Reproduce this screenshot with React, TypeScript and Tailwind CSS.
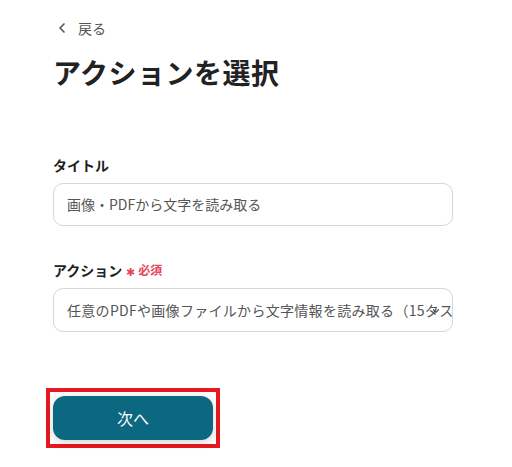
import { ChevronLeft, ChevronDown } from 'lucide-react'

const font = { fontFamily: '"Noto Sans CJK JP", "Noto Sans", sans-serif' }

export default function App() {
  return (
    <div className="min-h-[467px] w-[512px] bg-white text-[#222]" style={font}>
      <div className="pl-[53px] pt-[18px]">
        {/* Back link */}
        <div className="flex h-5 items-center gap-[8px] text-[14px] text-[#555]">
          <ChevronLeft className="h-4 w-4 ml-[1px]" strokeWidth={2.5} />
          <span>戻る</span>
        </div>

        {/* Heading */}
        <h1 className="mt-[14px] text-[28px] font-bold leading-[40px] tracking-[0.5px] text-[#222]">アクションを選択</h1>

        {/* Title field */}
        <label className="mt-[63px] block text-[14px] font-bold leading-5">タイトル</label>
        <div className="mt-2 flex h-[43px] w-[400px] items-center rounded-[10px] border border-[#d3d6db] px-[13px] text-[14px] text-[#555]">
          画像・PDFから文字を読み取る
        </div>

        {/* Action field */}
        <div className="mt-[34px] flex h-5 items-center">
          <span className="text-[14px] font-bold">アクション</span>
          <span className="ml-[4px] mt-[3px] text-[11px] text-[#e8445a]">✱</span>
          <span className="ml-[3px] text-[12px] font-bold text-[#e8445a]">必須</span>
        </div>
        <div className="relative mt-2 flex h-[44px] w-[400px] items-center overflow-hidden rounded-[10px] border border-[#d3d6db] pl-[13px] pr-[12px] text-[14px] text-[#555]">
          <span className="whitespace-nowrap tracking-[0.3px]">任意のPDFや画像ファイルから文字情報を読み取る（15タスク）</span>
          <ChevronDown className="absolute right-[11px] top-[17px] h-[10px] w-[10px] text-[#555]" strokeWidth={3} />
        </div>

        {/* Next button with highlight */}
        <div className="mt-[56px] -ml-[7px] inline-block border-4 border-[#e5191f] px-[3px] py-[4px]">
          <button className="flex h-[44px] w-[160px] items-center justify-center rounded-[12px] bg-[#0b6880] text-[16px] text-white shadow-[0_2px_8px_rgba(0,0,0,0.18)]">
            次へ
          </button>
        </div>
      </div>
    </div>
  )
}
